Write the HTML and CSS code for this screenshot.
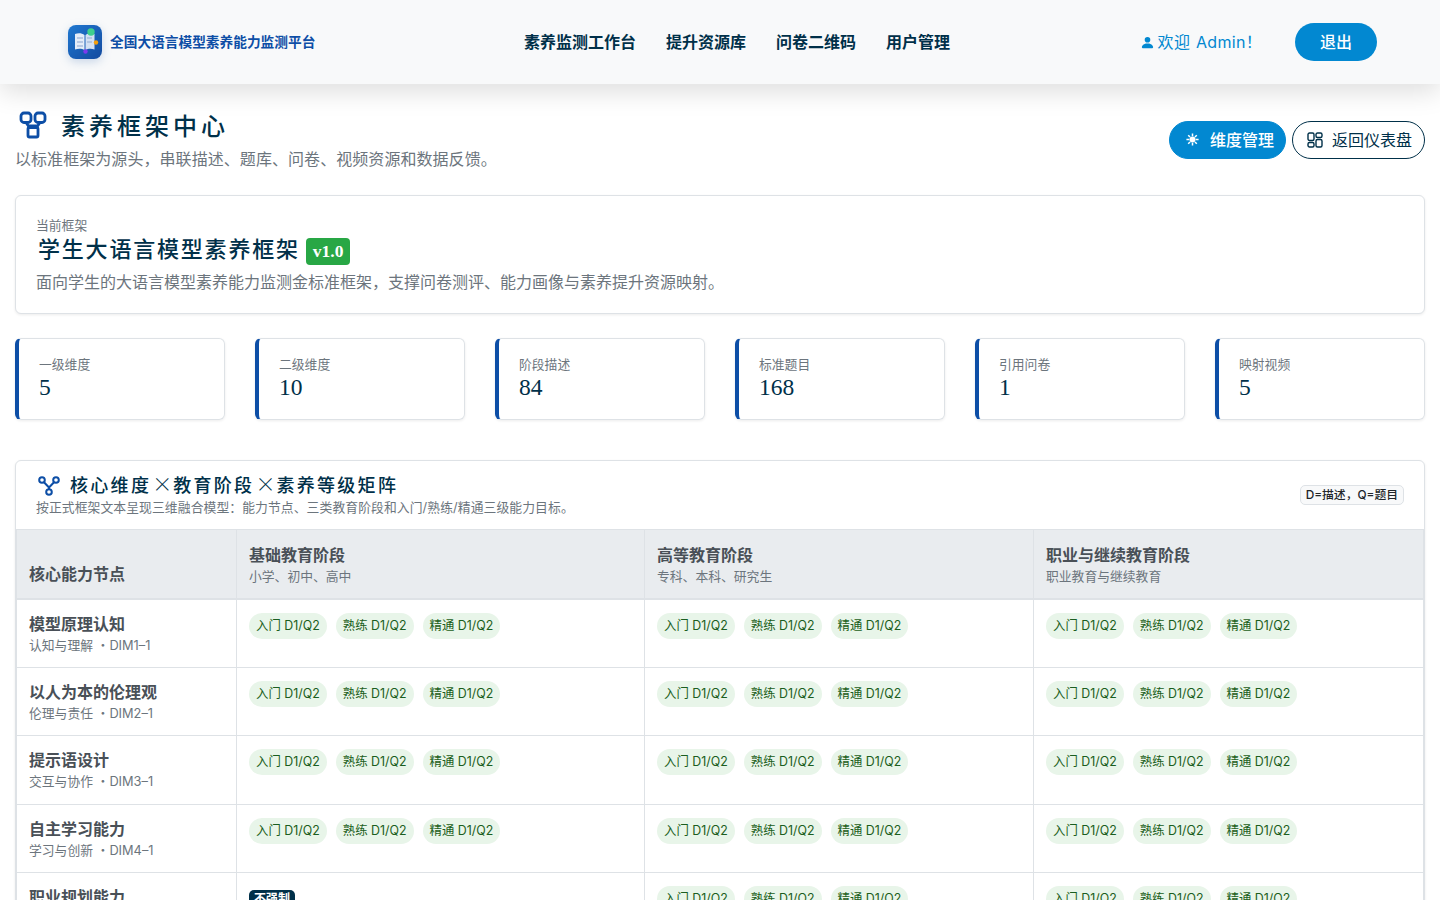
FILE: index.html
```html
<!DOCTYPE html>
<html lang="zh-CN">
<head>
	<meta charset="UTF-8">
	<meta name="viewport" content="width=device-width, initial-scale=1.0">
	<title>素养框架中心</title>
	<link rel="stylesheet" href="styles.css">
</head>
<body>
	<nav class="navbar">
		<a class="brand">
			<svg class="brand-logo" viewBox="0 0 34 34">
				<defs>
					<linearGradient id="logoBg" x1="0" y1="0" x2="1" y2="1">
						<stop offset="0" stop-color="#1f78d1"/>
						<stop offset="1" stop-color="#134a9f"/>
					</linearGradient>
				</defs>
				<rect width="34" height="34" rx="8" fill="url(#logoBg)"/>
				<path d="M7 9c3-1 7-1 9.500 1v15c-2.500-1.500-6.500-1.500-9.500-.5z" fill="#e4ecf8"/>
				<path d="M17.500 10c2.500-2 6-2 9-1v15.500c-3-1-6.500-1-9 .5z" fill="#d3e0f3"/>
				<path d="M9 13h6M9 17h6M9 21h6M19 13h5M19 17h5" stroke="#a9bcdc" stroke-width="1.300"/>
				<circle cx="23" cy="7" r="3.700" fill="#3ecf8e"/>
				<circle cx="28" cy="17.500" r="2.200" fill="#f59e0b"/>
				<circle cx="17.500" cy="26.500" r="2.200" fill="#7c3aed"/>
			</svg>
			<span class="brand-name">全国大语言模型素养能力监测平台</span>
		</a>
		<ul class="nav-links">
			<li>素养监测工作台</li>
			<li>提升资源库</li>
			<li>问卷二维码</li>
			<li>用户管理</li>
		</ul>
		<div class="nav-user">
			<span class="welcome">
				<svg class="user-icon" viewBox="0 0 16 16"><path d="M3 14s-1 0-1-1 1-4 6-4 6 3 6 4-1 1-1 1zm5-6a3 3 0 1 0 0-6 3 3 0 0 0 0 6"/></svg>
				<span>欢迎 Admin！</span>
			</span>
			<button class="btn-logout">退出</button>
		</div>
	</nav>

	<main class="page">
		<header class="page-head">
			<div>
				<h1 class="page-title">
					<svg class="title-icon" viewBox="0 0 28 28" fill="none" stroke="#0d4ea6" stroke-width="2.800">
						<rect x="2" y="2" width="10" height="9.500" rx="3"/>
						<rect x="16" y="2" width="10" height="9.500" rx="3"/>
						<rect x="9" y="16.500" width="10" height="9.500" rx="1.500"/>
						<path d="M7 11.500l2.500 3.500h9l2.500-3.500"/>
					</svg>
					素养框架中心
				</h1>
				<p class="page-sub">以标准框架为源头，串联描述、题库、问卷、视频资源和数据反馈。</p>
			</div>
			<div class="head-actions">
				<button class="btn btn-primary">
					<svg class="btn-icon" viewBox="0 0 16 16" fill="#fff" stroke="#fff"><circle cx="8" cy="8" r="3.200" stroke="none"/><path d="M8 1.500v3M8 11.500v3M1.500 8h3M11.500 8h3M3.400 3.400l2 2M10.600 10.600l2 2M3.400 12.600l2-2M10.600 5.400l2-2" stroke-width="1.600"/></svg>
					维度管理
				</button>
				<button class="btn btn-outline">
					<svg class="btn-icon" viewBox="0 0 16 16" fill="none" stroke="#003049" stroke-width="1.400"><rect x="1" y="1" width="6" height="7.500" rx="1.500"/><rect x="9" y="1" width="6" height="4.500" rx="1.500"/><rect x="1" y="10.500" width="6" height="4.500" rx="1.500"/><rect x="9" y="7.500" width="6" height="7.500" rx="1.500"/></svg>
					返回仪表盘
				</button>
			</div>
		</header>

		<section class="card framework">
			<div class="framework-label">当前框架</div>
			<h2 class="framework-name">学生大语言模型素养框架 <span class="version">v1.0</span></h2>
			<p class="framework-desc">面向学生的大语言模型素养能力监测金标准框架，支撑问卷测评、能力画像与素养提升资源映射。</p>
		</section>

		<section class="stats">
			<div class="stat"><div class="stat-label">一级维度</div><div class="stat-value">5</div></div>
			<div class="stat"><div class="stat-label">二级维度</div><div class="stat-value">10</div></div>
			<div class="stat"><div class="stat-label">阶段描述</div><div class="stat-value">84</div></div>
			<div class="stat"><div class="stat-label">标准题目</div><div class="stat-value">168</div></div>
			<div class="stat"><div class="stat-label">引用问卷</div><div class="stat-value">1</div></div>
			<div class="stat"><div class="stat-label">映射视频</div><div class="stat-value">5</div></div>
		</section>

		<section class="card matrix">
			<div class="matrix-head">
				<div>
					<h3 class="matrix-title">
						<svg class="matrix-icon" viewBox="0 0 22 20" fill="none" stroke="#0d4ea6" stroke-width="2">
							<circle cx="4" cy="4" r="2.800"/>
							<circle cx="18" cy="4" r="2.800"/>
							<circle cx="11" cy="16" r="2.800"/>
							<path d="M6 6.200l5 5.300 5-5.300M11 11.500v1.700"/>
						</svg>
						<span class="matrix-text">核心维度<span class="times">×</span>教育阶段<span class="times">×</span>素养等级矩阵</span>
					</h3>
					<p class="matrix-sub">按正式框架文本呈现三维融合模型：能力节点、三类教育阶段和入门/熟练/精通三级能力目标。</p>
				</div>
				<span class="legend">D=描述，Q=题目</span>
			</div>
			<table class="grid">
				<colgroup>
					<col class="col-node"><col class="col-basic"><col class="col-higher"><col class="col-voc">
				</colgroup>
				<thead>
					<tr>
						<th class="th-node">核心能力节点</th>
						<th>基础教育阶段<small>小学、初中、高中</small></th>
						<th>高等教育阶段<small>专科、本科、研究生</small></th>
						<th>职业与继续教育阶段<small>职业教育与继续教育</small></th>
					</tr>
				</thead>
				<tbody id="rows"></tbody>
			</table>
		</section>
	</main>

	<script>
		let rows = [
			{ name: '模型原理认知', sub: '认知与理解 ・DIM1–1' },
			{ name: '以人为本的伦理观', sub: '伦理与责任 ・DIM2–1' },
			{ name: '提示语设计', sub: '交互与协作 ・DIM3–1' },
			{ name: '自主学习能力', sub: '学习与创新 ・DIM4–1' },
			{ name: '职业规划能力', sub: '学习与创新 ・DIM4–2', skipBasic: true }
		];
		let chips = ['入门', '熟练', '精通'].map(l => `<span class="chip">${l} D1/Q2</span>`).join('');
		let content = '';
		for (let i = 0; i < rows.length; i++) {
			let basic = rows[i].skipBasic ? '<span class="no-req">不强制</span>' : chips;
			content += `
				<tr>
					<td class="node"><b>${rows[i].name}</b><small>${rows[i].sub}</small></td>
					<td>${basic}</td>
					<td>${chips}</td>
					<td>${chips}</td>
				</tr>
			`;
		}
		document.getElementById('rows').innerHTML = content;
	</script>
</body>
</html>
```

FILE: styles.css
```css
* {
	box-sizing: border-box;
}

body {
	margin: 0;
	background: #fff;
	color: #212529;
	font-family: Inter, "Noto Sans CJK SC", sans-serif;
	font-size: 16px;
	line-height: 1.5;
}

h1, h2, h3, p, ul {
	margin: 0;
	padding: 0;
}

/* navbar */
.navbar {
	height: 84px;
	padding: 0 63px 0 68px;
	display: grid;
	grid-template-columns: 456px auto 1fr;
	align-items: center;
	background: #f8f9fa;
	box-shadow: 0 8px 24px rgba(0, 0, 0, .13);
}

.brand {
	display: flex;
	align-items: center;
	gap: 8px;
}

.brand-logo {
	width: 34px;
	height: 34px;
	filter: drop-shadow(0 3px 5px rgba(13, 78, 166, .2));
}

.brand-name {
	font-size: 13.700px;
	font-weight: 700;
	color: #0d4ea6;
}

.nav-links {
	display: flex;
	gap: 30px;
	list-style: none;
	font-size: 16px;
	font-weight: 700;
	color: #003049;
}

.nav-user {
	display: flex;
	justify-content: flex-end;
	align-items: center;
	gap: 33px;
}

.welcome {
	color: #0288d1;
	font-size: 16px;
	letter-spacing: .3px;
	word-spacing: 1px;
	display: flex;
	align-items: center;
	gap: 3px;
}

.user-icon {
	width: 15px;
	height: 15px;
	fill: #0288d1;
}

.btn-logout {
	width: 82px;
	height: 38px;
	border: none;
	border-radius: 19px;
	background: #0288d1;
	color: #fff;
	font: inherit;
	font-weight: 500;
}

/* page */
.page {
	padding: 24px 15px 0;
}

.page-head {
	display: flex;
	justify-content: space-between;
	align-items: center;
	margin-bottom: 24px;
}

.page-title {
	display: flex;
	align-items: center;
	gap: 14px;
	padding-left: 4px;
	margin-bottom: 5px;
	font-family: "Noto Sans CJK SC", serif;
	font-size: 24px;
	font-weight: 500;
	letter-spacing: 4px;
	line-height: 34px;
	color: #003049;
}

.title-icon {
	width: 28px;
	height: 28px;
}

.page-sub {
	font-size: 16px;
	letter-spacing: .06px;
	color: #6c757d;
	line-height: 24px;
}

.head-actions {
	display: flex;
	gap: 6px;
}

.btn {
	height: 38px;
	display: flex;
	align-items: center;
	border-radius: 19px;
	font: inherit;
}

.btn-icon {
	width: 16px;
	height: 16px;
}

.btn-primary {
	padding: 0 11px 0 15px;
	gap: 10px;
	border: 1px solid #0288d1;
	background: #0288d1;
	color: #fff;
	font-weight: 500;
}

.btn-primary .btn-icon {
	width: 15px;
	height: 15px;
}

.btn-outline {
	padding: 0 12px 0 14px;
	gap: 9px;
	border: 1px solid #003049;
	background: #fff;
	color: #003049;
}

.card {
	border: 1px solid #dee2e6;
	border-radius: 6px;
	background: #fff;
	box-shadow: 0 1px 3px rgba(0, 0, 0, .08);
}

.framework {
	height: 119px;
	padding: 20px;
	margin-bottom: 24px;
}

.framework-label {
	font-size: 12.800px;
	line-height: 19px;
	color: #6c757d;
}

.framework-name {
	display: flex;
	align-items: flex-start;
	gap: 6px;
	height: 30px;
	padding-left: 2px;
	font-family: "Noto Sans CJK SC", serif;
	font-size: 22px;
	font-weight: 500;
	letter-spacing: 1.800px;
	line-height: 24px;
	color: #003049;
}

.version {
	height: 27px;
	margin-top: 3px;
	padding: 0 7px;
	border-radius: 4px;
	background: #28a745;
	color: #fff;
	font-family: "Liberation Serif", serif;
	font-size: 17.500px;
	font-weight: 700;
	letter-spacing: 0;
	line-height: 27px;
}

.framework-desc {
	margin-top: 5px;
	font-size: 16px;
	color: #6c757d;
}

/* stat cards */
.stats {
	display: grid;
	grid-template-columns: repeat(6, 1fr);
	gap: 30px;
	margin-bottom: 40px;
}

.stat {
	height: 82px;
	padding: 16px 20px;
	border: 1px solid #dee2e6;
	border-left: 4px solid #0d4ea6;
	border-radius: 6px;
	box-shadow: 0 1px 3px rgba(0, 0, 0, .08);
}

.stat-label {
	font-size: 12.800px;
	line-height: 19px;
	color: #6c757d;
}

.stat-value {
	font-family: "Liberation Serif", serif;
	font-size: 23.500px;
	line-height: 26px;
	color: #003049;
}

/* matrix */
.matrix {
	overflow: hidden;
}

.matrix-head {
	height: 68px;
	padding: 12px 20px;
	display: flex;
	justify-content: space-between;
	align-items: center;
}

.matrix-title {
	display: flex;
	align-items: center;
	gap: 10px;
	padding-left: 2px;
	font-family: "Noto Sans CJK SC", serif;
	font-size: 18px;
	font-weight: 500;
	letter-spacing: 2.300px;
	line-height: 24px;
	color: #003049;
}

.matrix-text {
	line-height: 21px;
	margin-bottom: 3px;
}

.times {
	display: inline-block;
	width: 22px;
	font-size: 20px;
	font-weight: 300;
	letter-spacing: 0;
	line-height: 20px;
	text-align: center;
}

.matrix-icon {
	width: 22px;
	height: 20px;
}

.matrix-sub {
	font-size: 12.800px;
	letter-spacing: .09px;
	line-height: 19px;
	color: #6c757d;
}

.legend {
	padding: 0 5px;
	border: 1px solid #dee2e6;
	border-radius: 5px;
	background: #f8f9fa;
	font-size: 11.800px;
	font-weight: 500;
	line-height: 18px;
	color: #212529;
}

.grid {
	width: 100%;
	table-layout: fixed;
	border-collapse: collapse;
	border: 1px solid #dee2e6;
	font-size: 16px;
}

.col-node { width: 220px; }
.col-basic { width: 408px; }
.col-higher { width: 389px; }

.grid th {
	height: 69.300px;
	padding: 12px;
	border: 1px solid #dee2e6;
	border-bottom-width: 2px;
	background: #e9ecef;
	color: #495057;
	font-weight: 700;
	text-align: left;
	vertical-align: bottom;
}

.grid small {
	display: block;
	font-size: 12.800px;
	font-weight: 400;
	line-height: 19px;
	color: #6c757d;
}

.grid td {
	height: 68.400px;
	padding: 12px;
	border: 1px solid #dee2e6;
	vertical-align: top;
}

.node b {
	display: block;
	color: #495057;
	line-height: 24px;
}

.chip {
	display: inline-block;
	height: 26px;
	padding: 0 7px;
	margin-right: 9px;
	border-radius: 13px;
	background: #e8f5e9;
	color: #1b5e20;
	font-size: 12.400px;
	line-height: 26px;
}

.no-req {
	display: inline-block;
	padding: 0 5px;
	border-radius: 5px;
	background: #003049;
	color: #fff;
	font-size: 12px;
	font-weight: 700;
	line-height: 18px;
	vertical-align: top;
	margin-top: 5px;
}
```
